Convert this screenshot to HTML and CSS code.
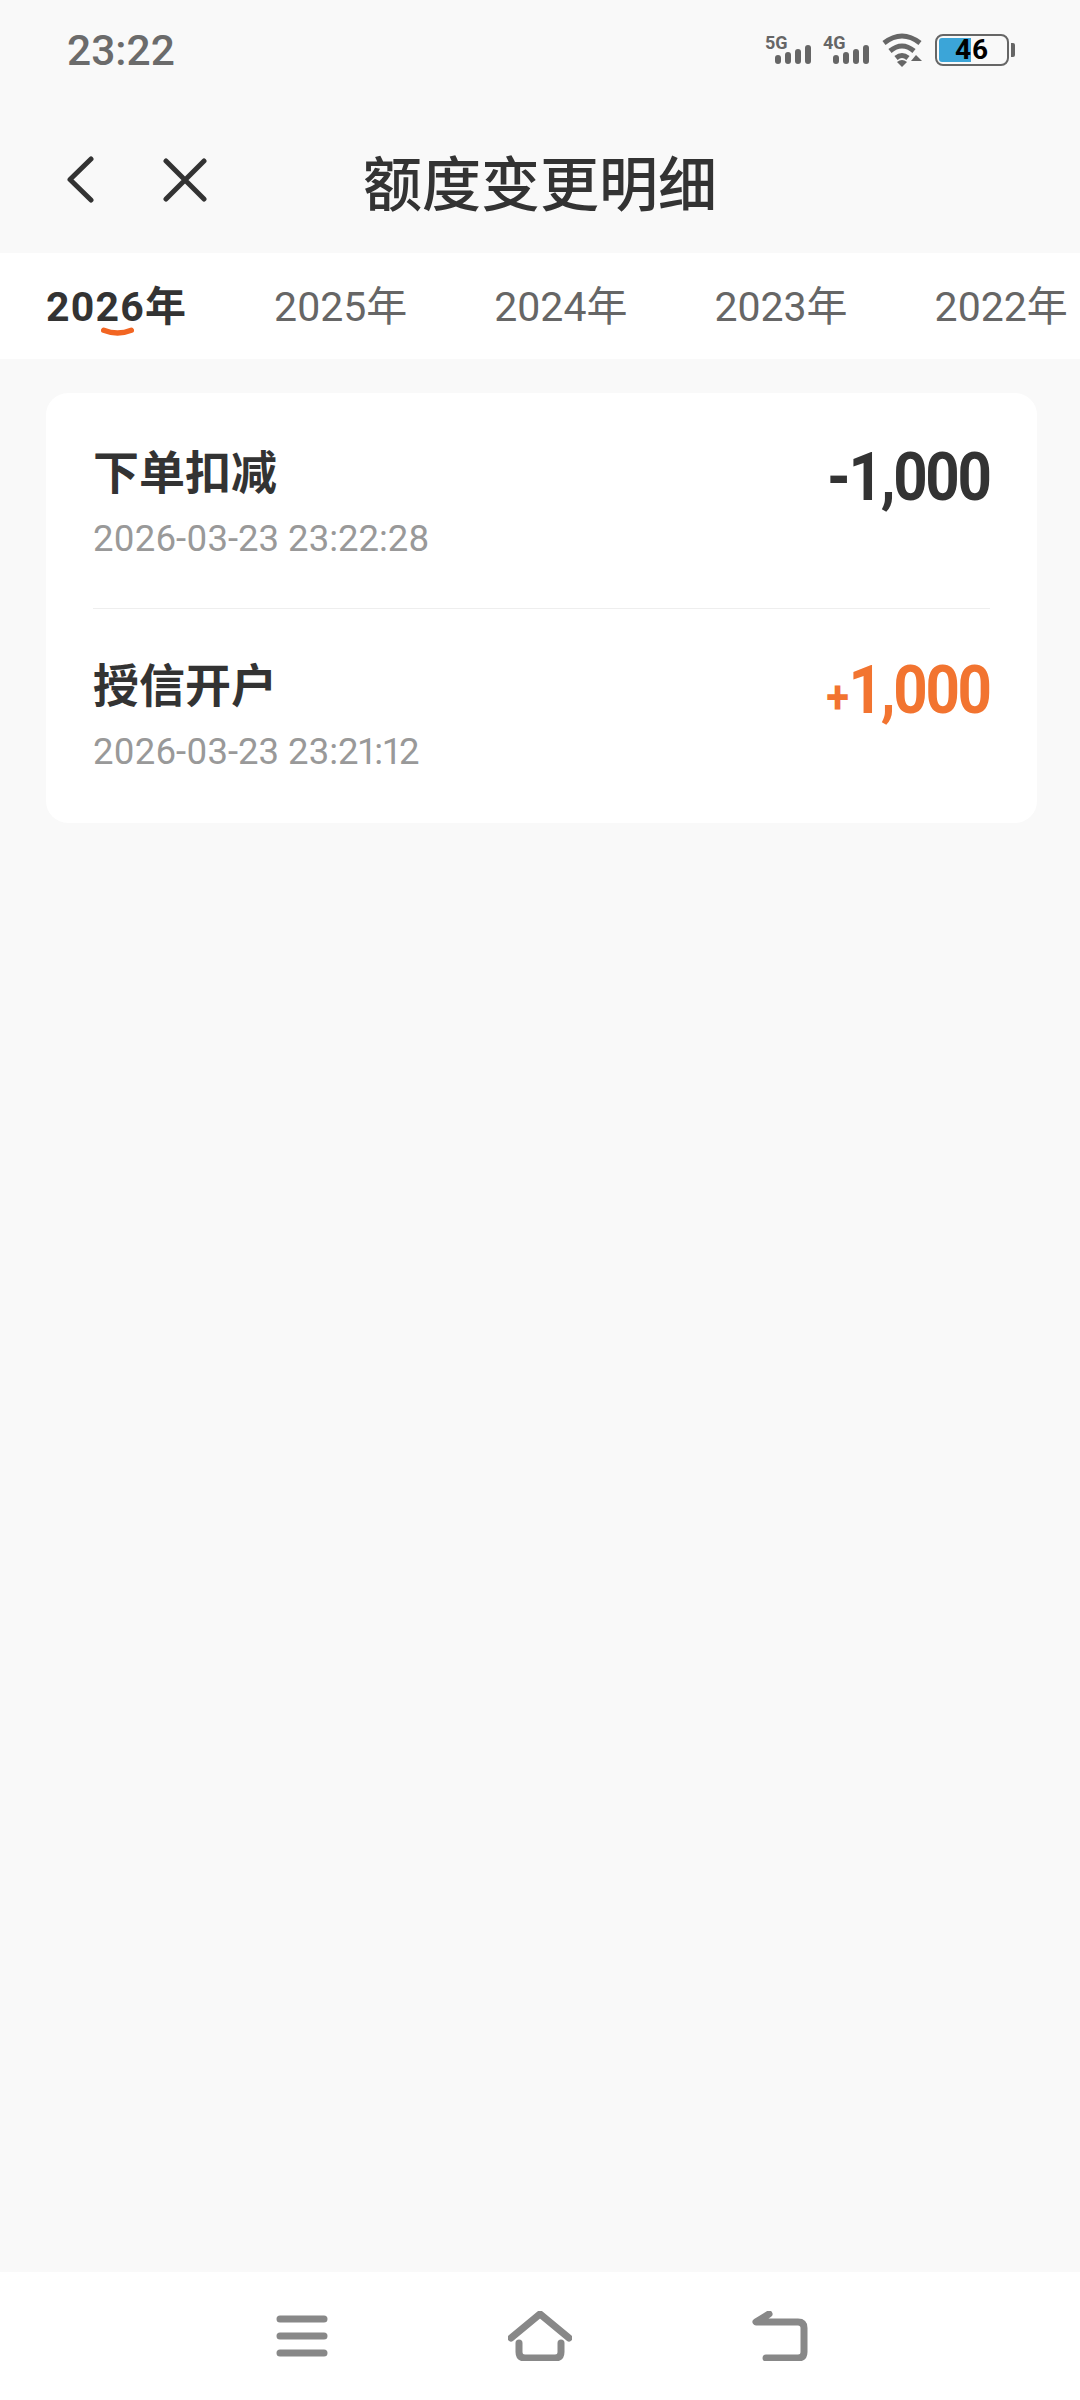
FILE: index.html
```html
<!doctype html>
<html lang="zh-CN">
<head>
<meta charset="utf-8">
<title>额度变更明细</title>
<meta name="viewport" content="width=device-width, initial-scale=1">
<link rel="stylesheet" href="styles.css">
</head>
<body>

<div class="status">
  <span class="clock">23:22</span>
  <div class="status-icons">
    <svg class="sig" width="48" height="36" viewBox="0 0 48 36">
      <text x="0" y="17" class="sig-text">5G</text>
      <rect x="10" y="23" width="6" height="9" rx="3"/><rect x="20" y="20" width="6" height="12" rx="3"/><rect x="30" y="17" width="6" height="15" rx="3"/><rect x="40" y="13" width="6" height="19" rx="3"/>
    </svg>
    <svg class="sig" width="48" height="36" viewBox="0 0 48 36">
      <text x="0" y="17" class="sig-text">4G</text>
      <rect x="10" y="23" width="6" height="9" rx="3"/><rect x="20" y="20" width="6" height="12" rx="3"/><rect x="30" y="17" width="6" height="15" rx="3"/><rect x="40" y="13" width="6" height="19" rx="3"/>
    </svg>
    <svg class="wifi" width="44" height="36" viewBox="0 0 44 36">
      <path d="M3 11 Q21 -3 39 11" /><path d="M9 19 Q21 9 33 19" /><path d="M15 26 Q21 21 27 26" />
      <path class="wifi-dot" d="M16 30 Q21 26 26 30 L21 35Z"/><path class="wifi-dot" d="M35 23 L41 29 H30Z"/>
    </svg>
    <div class="battery">
      <div class="battery-body"><div class="battery-fill"></div><span class="battery-num">46</span></div>
      <div class="battery-cap"></div>
    </div>
  </div>
</div>

<div class="navbar">
  <svg class="nav-ic back" width="30" height="48" viewBox="0 0 30 48"><path d="M25 3 L4 23.5 L25 44"/></svg>
  <svg class="nav-ic close" width="44" height="44" viewBox="0 0 44 44"><path d="M3 3 L41 41 M41 3 L3 41"/></svg>
  <h1>额度变更明细</h1>
</div>

<div class="tabs">
  <div class="tab active">2026年<svg class="smile" width="36" height="12" viewBox="0 0 36 12"><path d="M3 3 Q18 9 33 3"/></svg></div>
  <div class="tab">2025年</div>
  <div class="tab">2024年</div>
  <div class="tab">2023年</div>
  <div class="tab">2022年</div>
</div>

<main class="content">
  <div class="card">
    <div class="row">
      <div>
        <div class="row-title">下单扣减</div>
        <div class="row-time">2026-03-23 23:22:28</div>
      </div>
      <div class="amount">-1,000</div>
    </div>
    <div class="row">
      <div>
        <div class="row-title">授信开户</div>
        <div class="row-time">2026-03-23 23:21:12</div>
      </div>
      <div class="amount plus"><span class="sign">+</span>1,000</div>
    </div>
  </div>
</main>

<div class="bottom">
  <svg class="bot-ic" width="52" height="44" viewBox="0 0 52 44"><path d="M4 5 H48 M4 22 H48 M4 39 H48"/></svg>
  <svg class="bot-ic" width="64" height="50" viewBox="0 0 64 50"><path d="M3 27 L32 3 L61 27 M11 32 V41 Q11 47 17 47 H47 Q53 47 53 41 V32"/></svg>
  <svg class="bot-ic" width="56" height="50" viewBox="0 0 56 50"><path d="M17 3 L4 11 H46 Q52 11 52 17 V41 Q52 47 46 47 H14"/></svg>
</div>

</body>
</html>
```

FILE: styles.css
```css
* {
  box-sizing: border-box;
}
html, body {
  height: 100%;
}
body {
  margin: 0;
  display: flex;
  flex-direction: column;
  min-height: 2400px;
  background: #f9f9f9;
  color: #333;
  font-family: "Noto Sans CJK SC", Roboto, sans-serif;
}

/* status bar */
.status {
  height: 100px;
  display: flex;
  align-items: center;
  justify-content: space-between;
  padding: 0 65px 0 67px;
}
.clock {
  font: 500 42.5px Roboto, sans-serif;
  color: #6b6b6b;
}
.status-icons {
  display: flex;
  align-items: center;
  gap: 10px;
}
.sig rect {
  fill: #666;
}
.sig-text {
  font: 700 18px Roboto, sans-serif;
  fill: #666;
}
.wifi path {
  fill: none;
  stroke: #666;
  stroke-width: 5;
}
.wifi .wifi-dot {
  fill: #666;
  stroke: none;
}
.battery {
  display: flex;
  align-items: center;
  gap: 2px;
}
.battery-body {
  position: relative;
  width: 74px;
  height: 32px;
  border: 2px solid #666;
  border-radius: 8px;
  overflow: hidden;
  text-align: center;
}
.battery-fill {
  position: absolute;
  left: 2px;
  top: 2px;
  bottom: 2px;
  width: 32px;
  background: #3ba5d8;
  border-radius: 3px 0 0 3px;
}
.battery-num {
  position: relative;
  font: 700 28px/28px Roboto, sans-serif;
  color: #000;
  letter-spacing: 1px;
}
.battery-cap {
  width: 4px;
  height: 14px;
  background: #666;
  border-radius: 0 2px 2px 0;
}

/* nav */
.navbar {
  height: 153px;
  display: flex;
  align-items: center;
  position: relative;
  padding: 7px 0 0 66px;
}
.navbar h1 {
  position: absolute;
  left: 0;
  right: 0;
  margin: 0;
  padding-top: 1px;
  text-align: center;
  font-size: 59px;
  font-weight: 500;
  color: #333;
}
.nav-ic {
  fill: none;
  stroke: #333;
  stroke-width: 5;
  stroke-linecap: round;
  stroke-linejoin: round;
}
.close {
  margin-left: 67px;
}

/* years */
.tabs {
  height: 106px;
  background: #fff;
  display: flex;
  align-items: center;
  gap: 87px;
  padding: 0 0 6px 46px;
  overflow: hidden;
  white-space: nowrap;
}
.tab {
  position: relative;
  font-size: 41px;
  color: #666;
  font-family: Roboto, "Noto Sans CJK SC", sans-serif;
}
.tab.active {
  font-weight: 700;
  color: #333;
  letter-spacing: 1.2px;
}
.smile {
  position: absolute;
  left: 55px;
  bottom: -6px;
  width: 33px;
  fill: none;
  stroke: #f26522;
  stroke-width: 6;
  stroke-linecap: round;
}

/* list */
.content {
  flex: 1;
  padding: 34px 43px 0 46px;
}
.card {
  background: #fff;
  border-radius: 22px;
  padding: 0 47px;
}
.row {
  height: 215px;
  display: flex;
  justify-content: space-between;
  align-items: flex-start;
  padding-top: 43px;
}
.row + .row {
  border-top: 1px solid #eee;
  padding-top: 40px;
}
.row-title {
  font-size: 46px;
  font-weight: 700;
  line-height: 66px;
}
.row-time {
  font: 36.5px/46px Roboto, sans-serif;
  font-variant-numeric: proportional-nums;
  color: #999;
  margin-top: 14px;
}
.amount {
  font: 700 66px/66px Roboto, sans-serif;
  letter-spacing: -2.5px;
  margin-top: 9px;
  transform: scaleX(0.91);
  transform-origin: right center;
}
.amount.plus {
  color: #f27430;
}
.sign {
  font-size: 46px;
  margin-right: 2px;
}

/* bottom keys */
.bottom {
  height: 128px;
  background: #fff;
  display: flex;
  align-items: center;
  justify-content: center;
  gap: 180px;
  padding-left: 3px;
}
.bot-ic {
  fill: none;
  stroke: #888;
  stroke-width: 7;
  stroke-linecap: round;
  stroke-linejoin: round;
}
```
